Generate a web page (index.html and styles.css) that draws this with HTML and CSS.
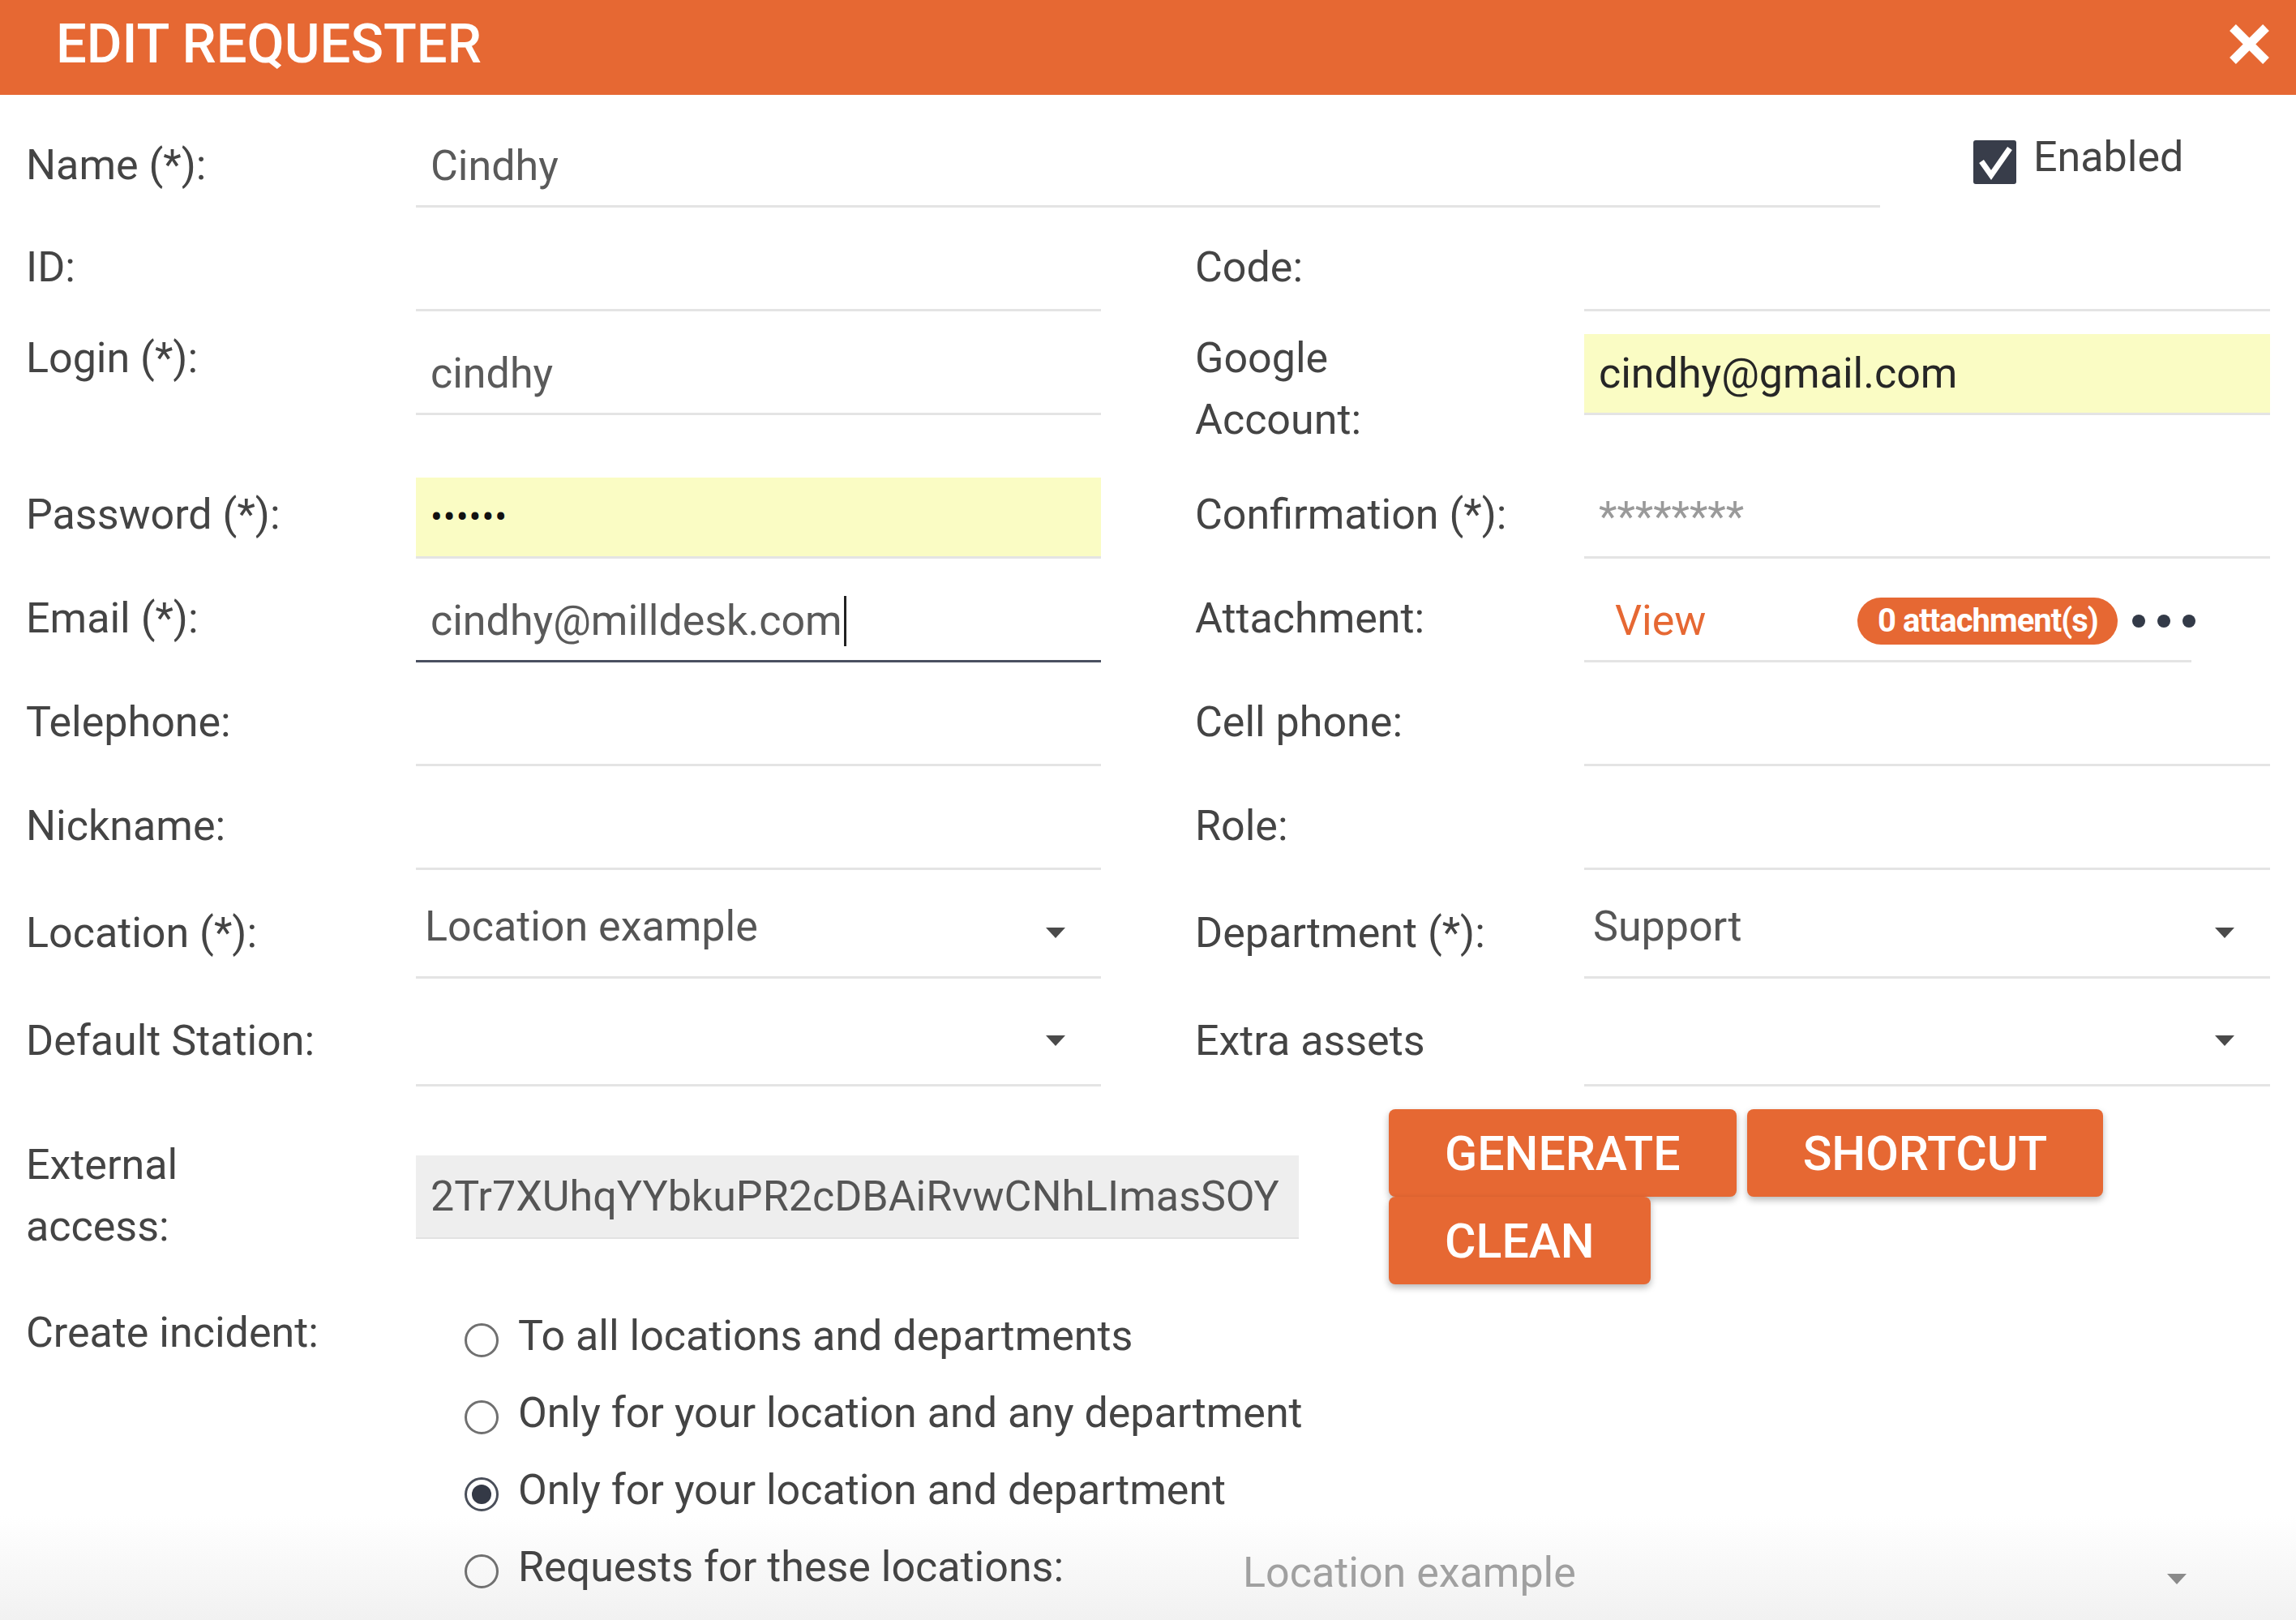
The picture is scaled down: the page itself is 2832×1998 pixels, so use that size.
FILE: index.html
```html
<!DOCTYPE html>
<html lang="en">
<head>
<meta charset="utf-8">
<title>Edit requester</title>
<link rel="stylesheet" href="styles.css">
</head>
<body>
<div class="dialog">
  <header class="hdr">
    <h1 class="title">EDIT REQUESTER</h1>
    <svg class="close" viewBox="0 0 53 53"><path d="M6 6L47 47M47 6L6 47" stroke="#fff" stroke-width="11" fill="none"/></svg>
  </header>
  <main class="form">
    <div class="row-name">
      <div class="label">Name (*):</div>
      <div class="field field-name">Cindhy</div>
      <div class="check">
        <svg class="box" viewBox="0 0 53 54"><rect width="53" height="54" rx="3" fill="#383d4a"/><path d="M10 26L22 43L45 10" fill="none" stroke="#fff" stroke-width="7"/></svg>
        <span class="check-text">Enabled</span>
      </div>
    </div>

    <div class="row">
      <div class="label">ID:</div><div class="field"></div>
      <div class="label label-r">Code:</div><div class="field"></div>
    </div>

    <div class="row row-tall">
      <div class="label">Login (*):</div><div class="field">cindhy</div>
      <div class="label label-r">Google<br>Account:</div><div class="field field-auto">cindhy@gmail.com</div>
    </div>

    <div class="row">
      <div class="label">Password (*):</div><div class="field field-auto field-pass">&#8226;&#8226;&#8226;&#8226;&#8226;&#8226;</div>
      <div class="label label-r">Confirmation (*):</div><div class="field field-ph">********</div>
    </div>

    <div class="row">
      <div class="label">Email (*):</div><div class="field field-focus">cindhy@milldesk.com<span class="caret"></span></div>
      <div class="label label-r">Attachment:</div>
      <div class="field field-attach">
        <span class="link">View</span>
        <span class="badge">0 attachment(s)</span>
        <span class="more"><i></i><i></i><i></i></span>
      </div>
    </div>

    <div class="row">
      <div class="label">Telephone:</div><div class="field"></div>
      <div class="label label-r">Cell phone:</div><div class="field"></div>
    </div>

    <div class="row">
      <div class="label">Nickname:</div><div class="field"></div>
      <div class="label label-r">Role:</div><div class="field"></div>
    </div>

    <div class="row row-sel">
      <div class="label">Location (*):</div>
      <div class="field select"><span class="sel-text">Location example</span><span class="arrow"></span></div>
      <div class="label label-r">Department (*):</div>
      <div class="field select"><span class="sel-text">Support</span><span class="arrow"></span></div>
    </div>

    <div class="row row-sel row-sel2">
      <div class="label">Default Station:</div>
      <div class="field select"><span class="sel-text"></span><span class="arrow"></span></div>
      <div class="label label-r">Extra assets</div>
      <div class="field select"><span class="sel-text"></span><span class="arrow"></span></div>
    </div>

    <div class="row-ext">
      <div class="label">External<br>access:</div>
      <div class="ext-input"><span class="ext-text">2Tr7XUhqYYbkuPR2cDBAiRvwCNhLImasSOY</span></div>
      <div class="btns">
        <button class="btn">GENERATE</button>
        <button class="btn">SHORTCUT</button>
        <button class="btn">CLEAN</button>
      </div>
    </div>

    <div class="row-radio">
      <div class="label">Create incident:</div>
      <div class="radios">
        <div class="opt"><span class="radio"></span><span>To all locations and departments</span></div>
        <div class="opt"><span class="radio"></span><span>Only for your location and any department</span></div>
        <div class="opt"><span class="radio on"></span><span>Only for your location and department</span></div>
        <div class="opt"><span class="radio"></span><span>Requests for these locations:</span>
          <div class="field select select-dim"><span class="sel-text">Location example</span><span class="arrow"></span></div>
        </div>
      </div>
    </div>
  </main>
</div>
</body>
</html>
```

FILE: styles.css
```css
html, body {
  margin: 0;
  padding: 0;
  background: #ffffff;
}
body {
  width: 2832px;
  height: 1998px;
  overflow: hidden;
  font-family: Roboto, "Liberation Sans", Arial, sans-serif;
}
.dialog {
  width: 2832px;
  height: 1998px;
  overflow: hidden;
  background: linear-gradient(to bottom, #ffffff 0, #ffffff 1870px, #f1f1f1 1998px);
}
.hdr {
  height: 117px;
  background: #e66833;
  display: flex;
  align-items: center;
  justify-content: space-between;
  padding: 0 31px 0 69px;
  box-sizing: border-box;
}
.title {
  margin: 0;
  padding-bottom: 8px;
  font-size: 67px;
  font-weight: 500;
  line-height: 1;
  color: #ffffff;
}
.close {
  width: 53px;
  height: 53px;
  margin-bottom: 8px;
}
.form {
  display: flex;
  flex-direction: column;
  padding: 39px 32px 0 32px;
}
.label {
  font-size: 52px;
  line-height: 76px;
  color: #444444;
  padding-top: 8px;
  white-space: nowrap;
}
.label-r {
  padding-left: 116px;
}
.row {
  display: grid;
  grid-template-columns: 481px 845px 596px 846px;
  align-items: start;
  margin-bottom: 28px;
}
.field {
  box-sizing: border-box;
  height: 100px;
  border-bottom: 3px solid #e4e4e4;
  display: flex;
  align-items: center;
  padding: 0 18px;
  font-size: 52px;
  color: #5a5a5a;
  white-space: nowrap;
  overflow: hidden;
}
.row-name {
  display: flex;
  align-items: flex-start;
  margin-bottom: 28px;
}
.row-name .label {
  width: 481px;
  box-sizing: border-box;
  padding-top: 10px;
}
.field-name {
  width: 1806px;
}
.check {
  display: flex;
  align-items: flex-start;
  margin-left: 115px;
}
.box {
  width: 53px;
  height: 54px;
  margin-top: 17px;
}
.check-text {
  margin-left: 21px;
  font-size: 52px;
  line-height: 76px;
  color: #444444;
}
.row-tall {
  margin-bottom: 33px;
}
.row-tall .label {
  padding-top: 0;
  margin-top: -8px;
}
.field-auto {
  background: #fafcc4;
  color: #262626;
}
.field-pass {
  font-size: 44px;
  color: #111111;
  letter-spacing: 1px;
}
.field-ph {
  color: #9a9a9a;
}
.field-focus {
  border-bottom-color: #4a5060;
}
.caret {
  display: inline-block;
  width: 0;
  height: 62px;
  border-right: 3px solid #222222;
  margin-left: 2px;
}
.field-attach {
  width: 749px;
  padding-left: 38px;
  padding-right: 0;
  overflow: visible;
}
.link {
  color: #e66833;
  flex: none;
}
.badge {
  display: inline-flex;
  align-items: center;
  justify-content: center;
  flex: none;
  width: 321px;
  height: 58px;
  margin-left: 187px;
  border-radius: 29px;
  background: #e66833;
  color: #ffffff;
  font-size: 40px;
  font-weight: 700;
  letter-spacing: -1px;
}
.more {
  display: flex;
  flex: none;
  gap: 15px;
  margin-left: 18px;
}
.more i {
  display: block;
  width: 16px;
  height: 16px;
  border-radius: 50%;
  background: #333a48;
}
.row-sel {
  margin-top: 4px;
}
.row-sel2 {
  margin-top: 3px;
}
.select {
  height: 102px;
  padding: 0 44px 24px 11px;
  justify-content: space-between;
}
.sel-text {
  color: #555555;
}
.arrow {
  width: 0;
  height: 0;
  border-left: 12px solid transparent;
  border-right: 12px solid transparent;
  border-top: 13px solid #4a4a4a;
  margin-top: 16px;
}
.row-ext {
  display: flex;
  align-items: flex-start;
  margin-bottom: 12px;
}
.row-ext .label {
  width: 481px;
  box-sizing: border-box;
  padding-top: 31px;
}
.ext-input {
  box-sizing: border-box;
  width: 1089px;
  height: 103px;
  margin-top: 57px;
  padding: 0 18px;
  background: #eeeeee;
  border-bottom: 2px solid #e2e2e2;
  display: flex;
  align-items: center;
  font-size: 52px;
  color: #555555;
}
.ext-text {
  display: block;
  width: 100%;
  white-space: nowrap;
  overflow: hidden;
}
.btns {
  display: flex;
  flex-wrap: wrap;
  column-gap: 13px;
  row-gap: 0;
  width: 1087px;
  margin-left: 111px;
}
.btn {
  height: 108px;
  padding: 0 69px;
  border: 0;
  border-radius: 8px;
  background: #e66833;
  color: #ffffff;
  font-family: Roboto, "Liberation Sans", Arial, sans-serif;
  font-size: 59px;
  font-weight: 500;
  box-shadow: 0 4px 8px rgba(0, 0, 0, 0.28);
}
.row-radio {
  display: flex;
  align-items: flex-start;
}
.row-radio .label {
  width: 481px;
  box-sizing: border-box;
  padding-top: 10px;
}
.radios {
  display: flex;
  flex-direction: column;
  padding-left: 60px;
  padding-top: 4px;
}
.opt {
  display: flex;
  align-items: center;
  height: 95px;
  font-size: 52px;
  color: #444444;
  white-space: nowrap;
}
.radio {
  box-sizing: border-box;
  width: 42px;
  height: 42px;
  border: 3px solid #707070;
  border-radius: 50%;
  margin-right: 24px;
  margin-top: 10px;
  display: flex;
  align-items: center;
  justify-content: center;
  flex: none;
}
.radio.on {
  border-color: #4a4f5a;
}
.radio.on::after {
  content: "";
  width: 24px;
  height: 24px;
  border-radius: 50%;
  background: #343946;
}
.select-dim {
  align-self: flex-start;
  width: 1219px;
  margin-top: 17px;
  margin-left: 210px;
  border-bottom-color: #e2e2e2;
}
.select-dim .sel-text {
  color: #a0a0a0;
}
.select-dim .arrow {
  border-top-color: #8a8a8a;
}
```
